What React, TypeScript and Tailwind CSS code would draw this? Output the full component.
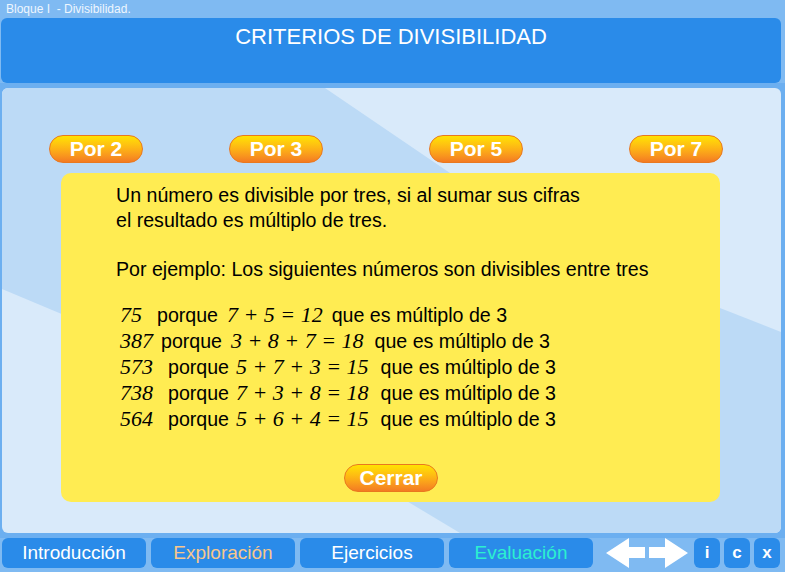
const sans = "font-['Liberation_Sans',Arial,sans-serif]";
const serif = "font-['Liberation_Serif','Times_New_Roman',serif] italic text-[22px]";

const rows = [
  { n: "75", e: "7 + 5 = 12", a: "ml-[15px]", b: "ml-[9px]", c: "ml-[9px]" },
  { n: "387", e: "3 + 8 + 7 = 18", a: "ml-[8px]", b: "ml-[9px]", c: "ml-[11px]" },
  { n: "573", e: "5 + 7 + 3 = 15", a: "ml-[15px]", b: "ml-[7px]", c: "ml-[12px]" },
  { n: "738", e: "7 + 3 + 8 = 18", a: "ml-[15px]", b: "ml-[7px]", c: "ml-[12px]" },
  { n: "564", e: "5 + 6 + 4 = 15", a: "ml-[15px]", b: "ml-[7px]", c: "ml-[12px]" },
];

function OrangeButton({ label, className = "" }: { label: string; className?: string }) {
  return (
    <div
      className={`flex h-[28px] w-[94px] items-center justify-center rounded-full border border-[#e9781f] bg-linear-to-b from-[#ffe300] via-[#fdb215] to-[#f37a22] text-[21px] font-bold text-white ${className}`}
    >
      {label}
    </div>
  );
}

function NavButton({ label, color }: { label: string; color: string }) {
  return (
    <div className={`flex h-[30px] w-[144px] items-center justify-center rounded-[6px] bg-[#2a8be9] text-[19px] ${color}`}>
      {label}
    </div>
  );
}

function SmallButton({ label }: { label: string }) {
  return (
    <div className="flex h-[30px] w-[26px] items-center justify-center rounded-[6px] bg-[#2a8be9] text-[17px] font-bold text-white">
      {label}
    </div>
  );
}

export default function App() {
  return (
    <div className={`flex h-[572px] w-[785px] flex-col bg-[#7fbaf2] ${sans}`}>
      <div className="h-[18px] pl-[6px] text-[12px] leading-[18px] text-[#eef6fe]">Bloque I&nbsp;&nbsp;- Divisibilidad.</div>

      <div className="ml-[1px] mr-[4px] h-[65px] rounded-[6px] bg-[#2a8be9] pt-[10px] text-center text-[22px] leading-[18px] text-white">
        CRITERIOS DE DIVISIBILIDAD
      </div>

      <div className="flex flex-col bg-[#6caff0] pb-[5px] pl-[2px] pr-[4px] pt-[5px]">
        <div className="relative h-[445px] overflow-hidden rounded-[6px] bg-[#d9eafa]">
          <svg className="absolute inset-0" width="779" height="445" viewBox="0 0 779 445">
            <polygon points="0,0 323,0 498,119 298,326 0,201" fill="#bcdaf6" />
            <polygon points="598,173 779,244 779,445 458,445 408,415 378,397" fill="#bcdaf6" />
          </svg>

          <div className="relative flex flex-col pt-[47px]">
            <div className="flex">
              <OrangeButton label="Por 2" className="ml-[47px]" />
              <OrangeButton label="Por 3" className="ml-[86px]" />
              <OrangeButton label="Por 5" className="ml-[106px]" />
              <OrangeButton label="Por 7" className="ml-[106px]" />
            </div>

            <div className="ml-[59px] mt-[10px] flex h-[329px] w-[659px] flex-col rounded-[10px] bg-[#ffec52] pl-[55px] pt-[10px] text-black">
              <div className="text-[19.6px] leading-[24.5px]">
                <div>Un número es divisible por tres, si al sumar sus cifras</div>
                <div>el resultado es múltiplo de tres.</div>
                <div className="h-[24.5px]" />
                <div>Por ejemplo: Los siguientes números son divisibles entre tres</div>
              </div>

              <div className="mt-[21px] flex flex-col pl-[4px]">
                {rows.map((r) => (
                  <div key={r.n} className="flex h-[26px] items-baseline whitespace-pre text-[19.6px] leading-[26px]">
                    <span className={serif}>{r.n}</span>
                    <span className={r.a}>porque</span>
                    <span className={`${serif} ${r.b}`}>{r.e}</span>
                    <span className={r.c}>que es múltiplo de 3</span>
                  </div>
                ))}
              </div>

              <div className="ml-[228px] mt-[32px]">
                <OrangeButton label="Cerrar" />
              </div>
            </div>
          </div>
        </div>
      </div>

      <div className="flex h-[30px] items-center pl-[2px]">
        <div className="flex gap-[5px]">
          <NavButton label="Introducción" color="text-white" />
          <NavButton label="Exploración" color="text-[#f8c78c]" />
          <NavButton label="Ejercicios" color="text-white" />
          <NavButton label="Evaluación" color="text-[#2cf0d0]" />
        </div>
        <svg className="ml-[13px]" width="82" height="30" viewBox="0 0 82 30">
          <polygon points="0,15 23,0 23,9 39,9 39,20 23,20 23,30" fill="#ffffff" />
          <polygon points="82,15 59,0 59,9 43,9 43,20 59,20 59,30" fill="#ffffff" />
        </svg>
        <div className="ml-[6px] flex gap-[4px]">
          <SmallButton label="i" />
          <SmallButton label="c" />
          <SmallButton label="x" />
        </div>
      </div>
    </div>
  );
}
